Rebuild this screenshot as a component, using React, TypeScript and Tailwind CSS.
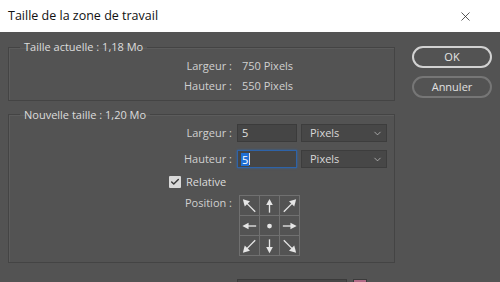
import { X, ChevronDown, Check } from "lucide-react";

type Cell = { kind: "straight" | "diag" | "dot"; rot: number };

const cells: Cell[] = [
  { kind: "diag", rot: 0 },
  { kind: "straight", rot: 0 },
  { kind: "diag", rot: 90 },
  { kind: "straight", rot: -90 },
  { kind: "dot", rot: 0 },
  { kind: "straight", rot: 90 },
  { kind: "diag", rot: -90 },
  { kind: "straight", rot: 180 },
  { kind: "diag", rot: 180 },
];

function Arrow({ cell }: { cell: Cell }) {
  return (
    <svg width="20" height="20" viewBox="0 0 20 20">
      {cell.kind === "dot" ? (
        <circle cx="10" cy="10" r="2.5" fill="#e6e6e6" />
      ) : (
        <g transform={`rotate(${cell.rot} 10 10)`} fill="#e6e6e6" stroke="#e6e6e6">
          {cell.kind === "straight" ? (
            <>
              <line x1="10" y1="17" x2="10" y2="8" strokeWidth="1.4" />
              <polygon points="10,2.5 6.5,9 13.5,9" stroke="none" />
            </>
          ) : (
            <>
              <line x1="16" y1="16" x2="7" y2="7" strokeWidth="1.4" />
              <polygon points="3,3 10.5,5 5,10.5" stroke="none" />
            </>
          )}
        </g>
      )}
    </svg>
  );
}

function UnitSelect() {
  return (
    <div className="w-[86px] h-[18px] bg-[#474747] border border-[#3d3d3d] flex items-center justify-between pl-[8px] pr-[3px] text-[#d8d8d8]">
      <span>Pixels</span>
      <ChevronDown size={11} strokeWidth={1.5} className="text-[#cfcfcf]" />
    </div>
  );
}

export default function App() {
  return (
    <div className="w-[500px] h-[282px] overflow-hidden bg-[#535353] font-['Open_Sans',sans-serif] text-[11px] text-[#d0d0d0]">
      {/* title bar */}
      <div className="h-8 bg-white flex items-center justify-between pl-2 pr-[27px] text-[12.5px] text-[#111]">
        <span>Taille de la zone de travail</span>
        <X size={15} strokeWidth={1.2} className="text-[#222]" />
      </div>

      <div className="flex pt-[7px]">
        <div className="ml-2 w-[387px]">
          {/* current size */}
          <fieldset className="border border-[#444] shadow-[inset_1px_1px_0_#5c5c5c] pb-[3px]">
            <legend className="ml-[11px] px-[4px] text-[#dcdcdc]">Taille actuelle : 1,18 Mo</legend>
            <div className="flex items-center h-5 mt-[1px]">
              <span className="w-[223px] text-right">Largeur :</span>
              <span className="ml-[10px]">750 Pixels</span>
            </div>
            <div className="flex items-center h-5">
              <span className="w-[223px] text-right">Hauteur :</span>
              <span className="ml-[10px]">550 Pixels</span>
            </div>
          </fieldset>

          {/* new size */}
          <fieldset className="mt-[6px] border border-[#444] shadow-[inset_1px_1px_0_#5c5c5c] h-[156px]">
            <legend className="ml-[11px] px-[4px] text-[#dcdcdc]">Nouvelle taille : 1,20 Mo</legend>
            <div className="flex items-center mt-[1px]">
              <span className="w-[223px] text-right">Largeur :</span>
              <div className="ml-[5px] w-[60px] h-[18px] bg-[#454545] border border-[#3b3b3b] flex items-center pl-[4px] text-[#e0e0e0]">
                5
              </div>
              <div className="ml-[4px]">
                <UnitSelect />
              </div>
            </div>
            <div className="flex items-center mt-[8px]">
              <span className="w-[223px] text-right">Hauteur :</span>
              <div className="ml-[5px] w-[60px] h-[18px] bg-[#454545] border border-[#2e63a8] shadow-[0_0_2px_#2e63a8] flex items-center pl-[3px] text-white">
                <span className="bg-[#1f6fd6] px-[1px] leading-[13px]">5</span>
                <span className="w-px h-[12px] bg-[#e0e0e0]" />
              </div>
              <div className="ml-[4px]">
                <UnitSelect />
              </div>
            </div>
            <div className="flex items-center mt-[6px] ml-[160px] h-4">
              <div className="w-[12px] h-[12px] bg-[#d9d9d9] rounded-[1px] flex items-center justify-center">
                <Check size={10} strokeWidth={3.5} className="text-[#3a3a3a]" />
              </div>
              <span className="ml-[5px] text-[#dcdcdc]">Relative</span>
            </div>
            <div className="flex items-start mt-[5px]">
              <span className="w-[223px] text-right leading-4">Position :</span>
              <div className="ml-[7px] grid grid-cols-3 border-l border-t border-[#707070]">
                {cells.map((c, i) => (
                  <div key={i} className="w-5 h-5 border-r border-b border-[#707070] flex items-center justify-center">
                    <Arrow cell={c} />
                  </div>
                ))}
              </div>
            </div>
          </fieldset>

          <div className="flex mt-[16px] ml-[229px]">
            <div className="w-[110px] h-4 bg-[#474747] border border-[#3b3b3b]" />
            <div className="ml-[6px] w-[14px] h-4 bg-[#b06a86] border border-[#3b3b3b]" />
          </div>
        </div>

        {/* buttons */}
        <div className="ml-[17px] mt-[7px] flex flex-col gap-[8px]">
          <div className="w-20 h-[22px] rounded-full border-2 border-[#d2d2d2] flex items-center justify-center text-[#e6e6e6]">
            OK
          </div>
          <div className="w-20 h-[22px] rounded-full border-2 border-[#767676] flex items-center justify-center text-[#e0e0e0]">
            Annuler
          </div>
        </div>
      </div>
    </div>
  );
}
